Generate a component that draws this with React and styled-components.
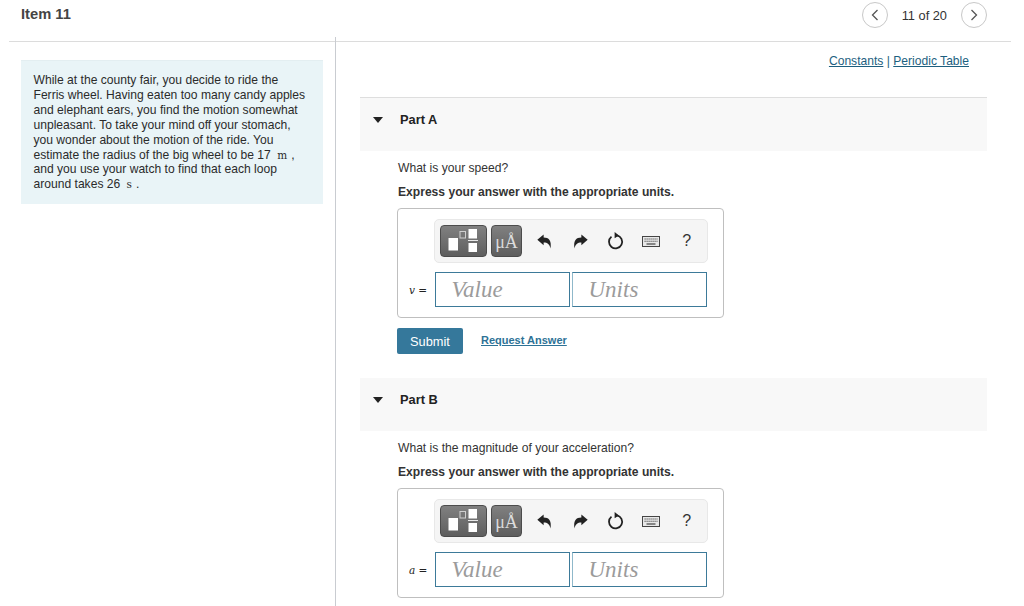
import React from "react";
import styled, { createGlobalStyle } from "styled-components";

const Global = createGlobalStyle`
  html, body { margin: 0; padding: 0; background: #fff; }
  body { font-family: "Liberation Sans", Arial, sans-serif; color: #222; }
  #root { width: 1024px; height: 606px; overflow: hidden; }
`;

const Page = styled.div`
  width: 1024px;
  height: 606px;
  overflow: hidden;
`;
const Header = styled.header`
  margin: 0 13px 0 9px;
  height: 41px;
  padding: 0 24px 0 12px;
  border-bottom: 1px solid #dcdcdc;
  display: flex;
  align-items: flex-start;
  justify-content: space-between;
  box-sizing: content-box;
`;
const Title = styled.h1`
  margin: 6px 0 0;
  font-size: 14.7px;
  line-height: 17px;
  font-weight: 700;
  color: #444;
`;
const Pager = styled.div`
  display: flex;
  align-items: center;
  gap: 14px;
  height: 30px;
  font-size: 12.8px;
  color: #333;
`;
const RoundButton = styled.button`
  width: 26px;
  height: 26px;
  padding: 0;
  border-radius: 50%;
  border: 1px solid #c8c8c8;
  background: #fff;
  display: flex;
  align-items: center;
  justify-content: center;
`;
const Main = styled.main`
  display: flex;
  align-items: stretch;
  height: 565px;
`;
const LeftColumn = styled.aside`
  width: 302px;
  margin: 18px 12px 0 21px;
`;
const Passage = styled.div`
  background: #e9f4f7;
  border-top: 1px solid #e3eef1;
  box-sizing: border-box;
  height: 144px;
  padding: 12.4px 12px 0 12.5px;
  font-size: 12.1px;
  line-height: 14.85px;
  color: #2b2b2b;
`;
const Unit = styled.span`
  display: inline-block;
  height: 10px;
  font-family: "DejaVu Serif", serif;
  font-size: 10.5px;
  line-height: 10px;
  margin: 0 4px 0 3px;
`;
const RightColumn = styled.section`
  width: 652px;
  box-sizing: border-box;
  margin-top: -5px;
  padding-left: 24px;
  border-left: 1px solid #c9ccd1;
`;
const LinkRow = styled.div`
  height: 60px;
  padding: 16px 18px 0 0;
  box-sizing: border-box;
  text-align: right;
  font-size: 12.1px;
  line-height: 16px;
  color: #1d5f7f;
`;
const TextLink = styled.a`
  color: #1d5f7f;
  text-decoration: underline;
`;
const PartHeader = styled.div`
  height: ${(p) => (p.$first ? 54 : 53)}px;
  box-sizing: border-box;
  background: #f8f8f8;
  border-top: ${(p) => (p.$first ? "1px solid #dedede" : "none")};
  display: flex;
  align-items: flex-start;
  padding: 14px 0 0 13px;
  gap: 17px;
`;
const Caret = styled.span`
  width: 0;
  height: 0;
  margin-top: 5px;
  border-left: 5.5px solid transparent;
  border-right: 5.5px solid transparent;
  border-top: 6px solid #222;
`;
const PartTitle = styled.h2`
  margin: 0;
  font-size: 12.8px;
  line-height: 16px;
  font-weight: 700;
  color: #222;
`;
const PartBody = styled.div`
  padding: 9px 0 0 37px;
`;
const Question = styled.p`
  margin: 0;
  padding-left: 1px;
  font-size: 12.1px;
  line-height: 16px;
  color: #333;
`;
const Instruction = styled.p`
  margin: 8px 0;
  padding-left: 1px;
  font-size: 12.1px;
  line-height: 16px;
  font-weight: 700;
  color: #333;
`;
const Editor = styled.div`
  width: 327px;
  height: 110px;
  box-sizing: border-box;
  border: 1px solid #bfbfbf;
  border-radius: 4px;
  padding: 10px 16px 0 10px;
`;
const Toolbar = styled.div`
  margin-left: 26px;
  width: 274px;
  height: 44px;
  box-sizing: border-box;
  background: #f5f5f5;
  border: 1px solid #e8e8e8;
  border-radius: 5px;
  display: flex;
  align-items: center;
  padding: 0 0 0 5px;
`;
const TemplateButton = styled.button`
  width: ${(p) => p.$w}px;
  height: 32px;
  margin-right: 4px;
  padding: ${(p) => (p.$text ? "3px 0 0" : "0")};
  border: 1px solid #4c4c4c;
  border-radius: 4px;
  background: linear-gradient(#808080, #5e5e5e);
  display: flex;
  align-items: center;
  justify-content: center;
  color: #dcdcdc;
  font-family: "Liberation Serif", serif;
  font-size: 18px;
  font-weight: 400;
`;
const ToolIcon = styled.span`
  width: 35.5px;
  display: flex;
  align-items: center;
  justify-content: center;
  color: #333;
  font-size: 16px;
  &:first-of-type { margin-left: 1px; }
`;
const InputRow = styled.div`
  display: flex;
  align-items: center;
  margin-top: 9px;
  gap: 2px;
`;
const VarLabel = styled.label`
  width: 27px;
  margin-right: -2px;
  padding-left: 1px;
  box-sizing: border-box;
  font-family: "DejaVu Serif", serif;
  font-size: 10.5px;
  color: #222;
  white-space: pre;
`;
const Field = styled.div`
  width: 135px;
  height: 35px;
  box-sizing: border-box;
  border: 1px solid #3d7a99;
  padding-left: 15.5px;
  font-family: "Liberation Serif", serif;
  font-style: italic;
  font-size: 23px;
  line-height: 33px;
  color: #9b9b9b;
  border-left-color: ${(p) => (p.$soft ? "#8fb8ca" : "#3d7a99")};
`;
const Actions = styled.div`
  display: flex;
  align-items: center;
  gap: 18px;
  margin-top: 10px;
  height: 26px;
`;
const Submit = styled.button`
  width: 66px;
  height: 26px;
  padding: 0;
  border: none;
  border-radius: 2px;
  background: #35789b;
  color: #fff;
  font-family: "Liberation Sans", Arial, sans-serif;
  font-size: 12.8px;
`;
const RequestLink = styled.a`
  font-size: 11px;
  font-weight: 700;
  color: #2d7296;
  text-decoration: underline;
  margin-top: -2px;
`;
const PartWrap = styled.div`
  height: ${(p) => p.$h}px;
`;

const Chevron = ({ left }) => (
  <svg width="10" height="14" viewBox="0 0 10 14" fill="none" stroke="#555" strokeWidth="1.3">
    <path d={left ? "M7.5 2 L2.5 7 L7.5 12" : "M2.5 2 L7.5 7 L2.5 12"} />
  </svg>
);
const TemplateIcon = () => (
  <svg width="34" height="24" viewBox="0 0 34 24">
    <rect x="1.5" y="9" width="9.5" height="12.5" fill="#fff" />
    <rect x="13" y="2.5" width="5.5" height="6.5" fill="none" stroke="#cfcfcf" strokeWidth="1" />
    <rect x="21.5" y="0" width="8.5" height="9.5" fill="#fff" />
    <rect x="21" y="11" width="10" height="1" fill="#e8e8e8" />
    <rect x="21.5" y="14" width="8.5" height="9" fill="#fff" />
  </svg>
);
const Undo = ({ flip }) => (
  <svg width="15" height="15" viewBox="0 0 14 14" style={flip ? { transform: "scaleX(-1)" } : undefined}>
    <path d="M0.3 5.3 L6.2 0.4 V3.3 C11 3.3 13.8 6 12.6 13.6 C11.8 9.8 9.8 8 6.2 8 V10.6 Z" fill="#222" />
  </svg>
);
const Reset = () => (
  <svg width="17" height="18" viewBox="0 0 16 17" fill="none">
    <path d="M9.4 3.2 A6.2 6.2 0 1 1 4.2 4.4" stroke="#222" strokeWidth="1.7" />
    <path d="M7.2 0 L11.2 3.2 L7.2 6 Z" fill="#222" />
  </svg>
);
const Keyboard = () => (
  <svg width="18" height="11" viewBox="0 0 18 11">
    <rect x="0.5" y="0.5" width="17" height="10" fill="#e8e8e8" stroke="#444" />
    <path d="M2.5 3 H15.5 M2.5 5.2 H15.5" stroke="#444" strokeWidth="1.1" strokeDasharray="1.2 0.8" />
    <path d="M4.5 8 H13.5" stroke="#444" strokeWidth="1.2" />
  </svg>
);

const MathEditor = ({ variable }) => (
  <Editor>
    <Toolbar>
      <TemplateButton $w={47}><TemplateIcon /></TemplateButton>
      <TemplateButton $w={31} $text>μÅ</TemplateButton>
      <ToolIcon><Undo /></ToolIcon>
      <ToolIcon><Undo flip /></ToolIcon>
      <ToolIcon><Reset /></ToolIcon>
      <ToolIcon><Keyboard /></ToolIcon>
      <ToolIcon>?</ToolIcon>
    </Toolbar>
    <InputRow>
      <VarLabel><i>{variable}</i> =</VarLabel>
      <Field>Value</Field>
      <Field $soft>Units</Field>
    </InputRow>
  </Editor>
);

export default function App() {
  return (
    <Page>
      <Global />
      <Header>
        <Title>Item 11</Title>
        <Pager>
          <RoundButton aria-label="Previous"><Chevron left /></RoundButton>
          <span>11 of 20</span>
          <RoundButton aria-label="Next"><Chevron /></RoundButton>
        </Pager>
      </Header>
      <Main>
        <LeftColumn>
          <Passage>
            While at the county fair, you decide to ride the<br />
            Ferris wheel. Having eaten too many candy apples<br />
            and elephant ears, you find the motion somewhat<br />
            unpleasant. To take your mind off your stomach,<br />
            you wonder about the motion of the ride. You<br />
            estimate the radius of the big wheel to be 17 <Unit>m</Unit>,<br />
            and you use your watch to find that each loop<br />
            around takes 26 <Unit>s</Unit>.
          </Passage>
        </LeftColumn>
        <RightColumn>
          <LinkRow>
            <TextLink>Constants</TextLink> | <TextLink>Periodic Table</TextLink>
          </LinkRow>
          <PartWrap $h={281}>
            <PartHeader $first>
              <Caret />
              <PartTitle>Part A</PartTitle>
            </PartHeader>
            <PartBody>
              <Question>What is your speed?</Question>
              <Instruction>Express your answer with the appropriate units.</Instruction>
              <MathEditor variable="v" />
              <Actions>
                <Submit>Submit</Submit>
                <RequestLink>Request Answer</RequestLink>
              </Actions>
            </PartBody>
          </PartWrap>
          <PartWrap $h={228}>
            <PartHeader>
              <Caret />
              <PartTitle>Part B</PartTitle>
            </PartHeader>
            <PartBody>
              <Question>What is the magnitude of your acceleration?</Question>
              <Instruction>Express your answer with the appropriate units.</Instruction>
              <MathEditor variable="a" />
            </PartBody>
          </PartWrap>
        </RightColumn>
      </Main>
    </Page>
  );
}
